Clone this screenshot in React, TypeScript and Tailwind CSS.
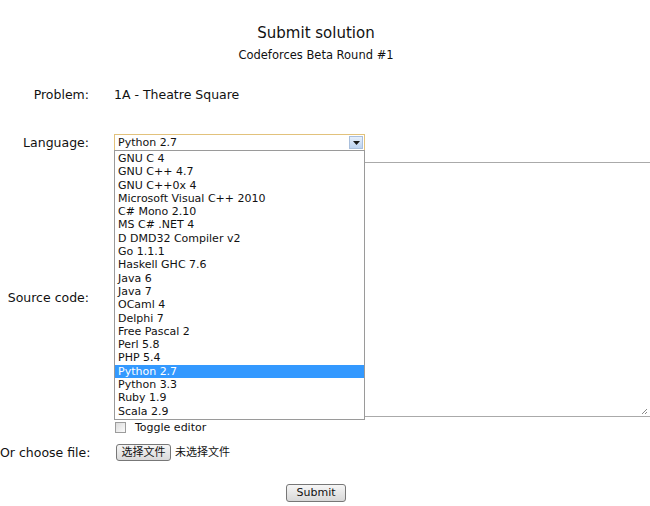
const languages = [
  "GNU C 4",
  "GNU C++ 4.7",
  "GNU C++0x 4",
  "Microsoft Visual C++ 2010",
  "C# Mono 2.10",
  "MS C# .NET 4",
  "D DMD32 Compiler v2",
  "Go 1.1.1",
  "Haskell GHC 7.6",
  "Java 6",
  "Java 7",
  "OCaml 4",
  "Delphi 7",
  "Free Pascal 2",
  "Perl 5.8",
  "PHP 5.4",
  "Python 2.7",
  "Python 3.3",
  "Ruby 1.9",
  "Scala 2.9",
];

const selected = "Python 2.7";

function Label({ children }: { children: React.ReactNode }) {
  return (
    <div className="w-[89px] shrink-0 text-right whitespace-nowrap text-[12.5px] leading-[16px]">
      {children}
    </div>
  );
}

function LanguageSelect() {
  return (
    <div className="relative w-[251px]">
      <div className="flex h-[17px] items-center border border-[#e2c27c] bg-white pl-[3px]">
        <span className="flex-1 text-[11px] leading-[13px]">{selected}</span>
        <div className="mr-px flex h-[13px] w-[14px] items-center justify-center border border-[#a9bfdc] bg-linear-to-b from-[#e6effb] to-[#bcd3f0]">
          <svg width="7" height="4" viewBox="0 0 7 4">
            <path d="M0 0h7L3.5 4z" fill="#1a1a1a" />
          </svg>
        </div>
      </div>
      {/* opened list lies over the textarea */}
      <ul className="absolute left-0 top-[16px] z-10 w-[251px] border border-[#9a9a9a] bg-white py-px">
        {languages.map((lang) => (
          <li
            key={lang}
            className={
              lang === selected
                ? "h-[13.3px] bg-[#3399ff] pl-[3px] text-[11px] leading-[14px] text-white"
                : "h-[13.3px] pl-[3px] text-[11px] leading-[14px]"
            }
          >
            {lang}
          </li>
        ))}
      </ul>
    </div>
  );
}

export default function App() {
  return (
    <div className="relative h-[506px] w-[650px] overflow-hidden bg-white font-['DejaVu_Sans','Noto_Sans_CJK_SC',sans-serif] text-[#111]">
      <div className="w-[632px]">
        <div className="pt-[24px] text-center text-[15px] leading-[18px]">
          Submit solution
        </div>
        <div className="mt-[6px] text-center text-[11.5px] leading-[14px]">
          Codeforces Beta Round #1
        </div>

        <div className="mt-[25px] flex items-center">
          <Label>Problem:</Label>
          <div className="ml-[25px] text-[12.5px] leading-[16px]">
            1A - Theatre Square
          </div>
        </div>

        <div className="mt-[31px] flex items-center">
          <Label>Language:</Label>
          <div className="ml-[25px]">
            <LanguageSelect />
          </div>
        </div>

        <div className="mt-[11px] flex items-center">
          <Label>Source code:</Label>
          <div className="ml-[25px]">
            <div className="relative h-[255px] w-[538px] border border-[#aaaaaa] bg-white">
              <svg
                className="absolute bottom-[1px] right-[3px]"
                width="7"
                height="7"
                viewBox="0 0 7 7"
              >
                <path d="M6 1L1 6M6 4L4 6" stroke="#8a8a8a" strokeWidth="1" />
              </svg>
            </div>
            <div className="mt-[4px] flex h-[13px] items-center">
              <div className="ml-px h-[11px] w-[11px] border border-[#9c9c9c] bg-linear-to-br from-[#dcdcdc] to-[#fbfbfb]" />
              <span className="ml-[9px] text-[11px] leading-[13px]">
                Toggle editor
              </span>
            </div>
          </div>
        </div>

        <div className="mt-[10px] flex items-center">
          <Label>Or choose file:</Label>
          <div className="ml-[27px] flex items-center">
            <button className="h-[17px] w-[55px] rounded-[3px] border border-[#777] bg-linear-to-b from-[#f6f6f6] to-[#dadada] text-[11px] leading-[13px]">
              选择文件
            </button>
            <span className="ml-[4px] text-[11px] leading-[13px]">未选择文件</span>
          </div>
        </div>

        <div className="mt-[23px] flex justify-center">
          <button className="h-[18px] w-[60px] rounded-[3px] border border-[#777] bg-linear-to-b from-[#f6f6f6] to-[#d8d8d8] text-[11px] leading-[14px]">
            Submit
          </button>
        </div>
      </div>
    </div>
  );
}
